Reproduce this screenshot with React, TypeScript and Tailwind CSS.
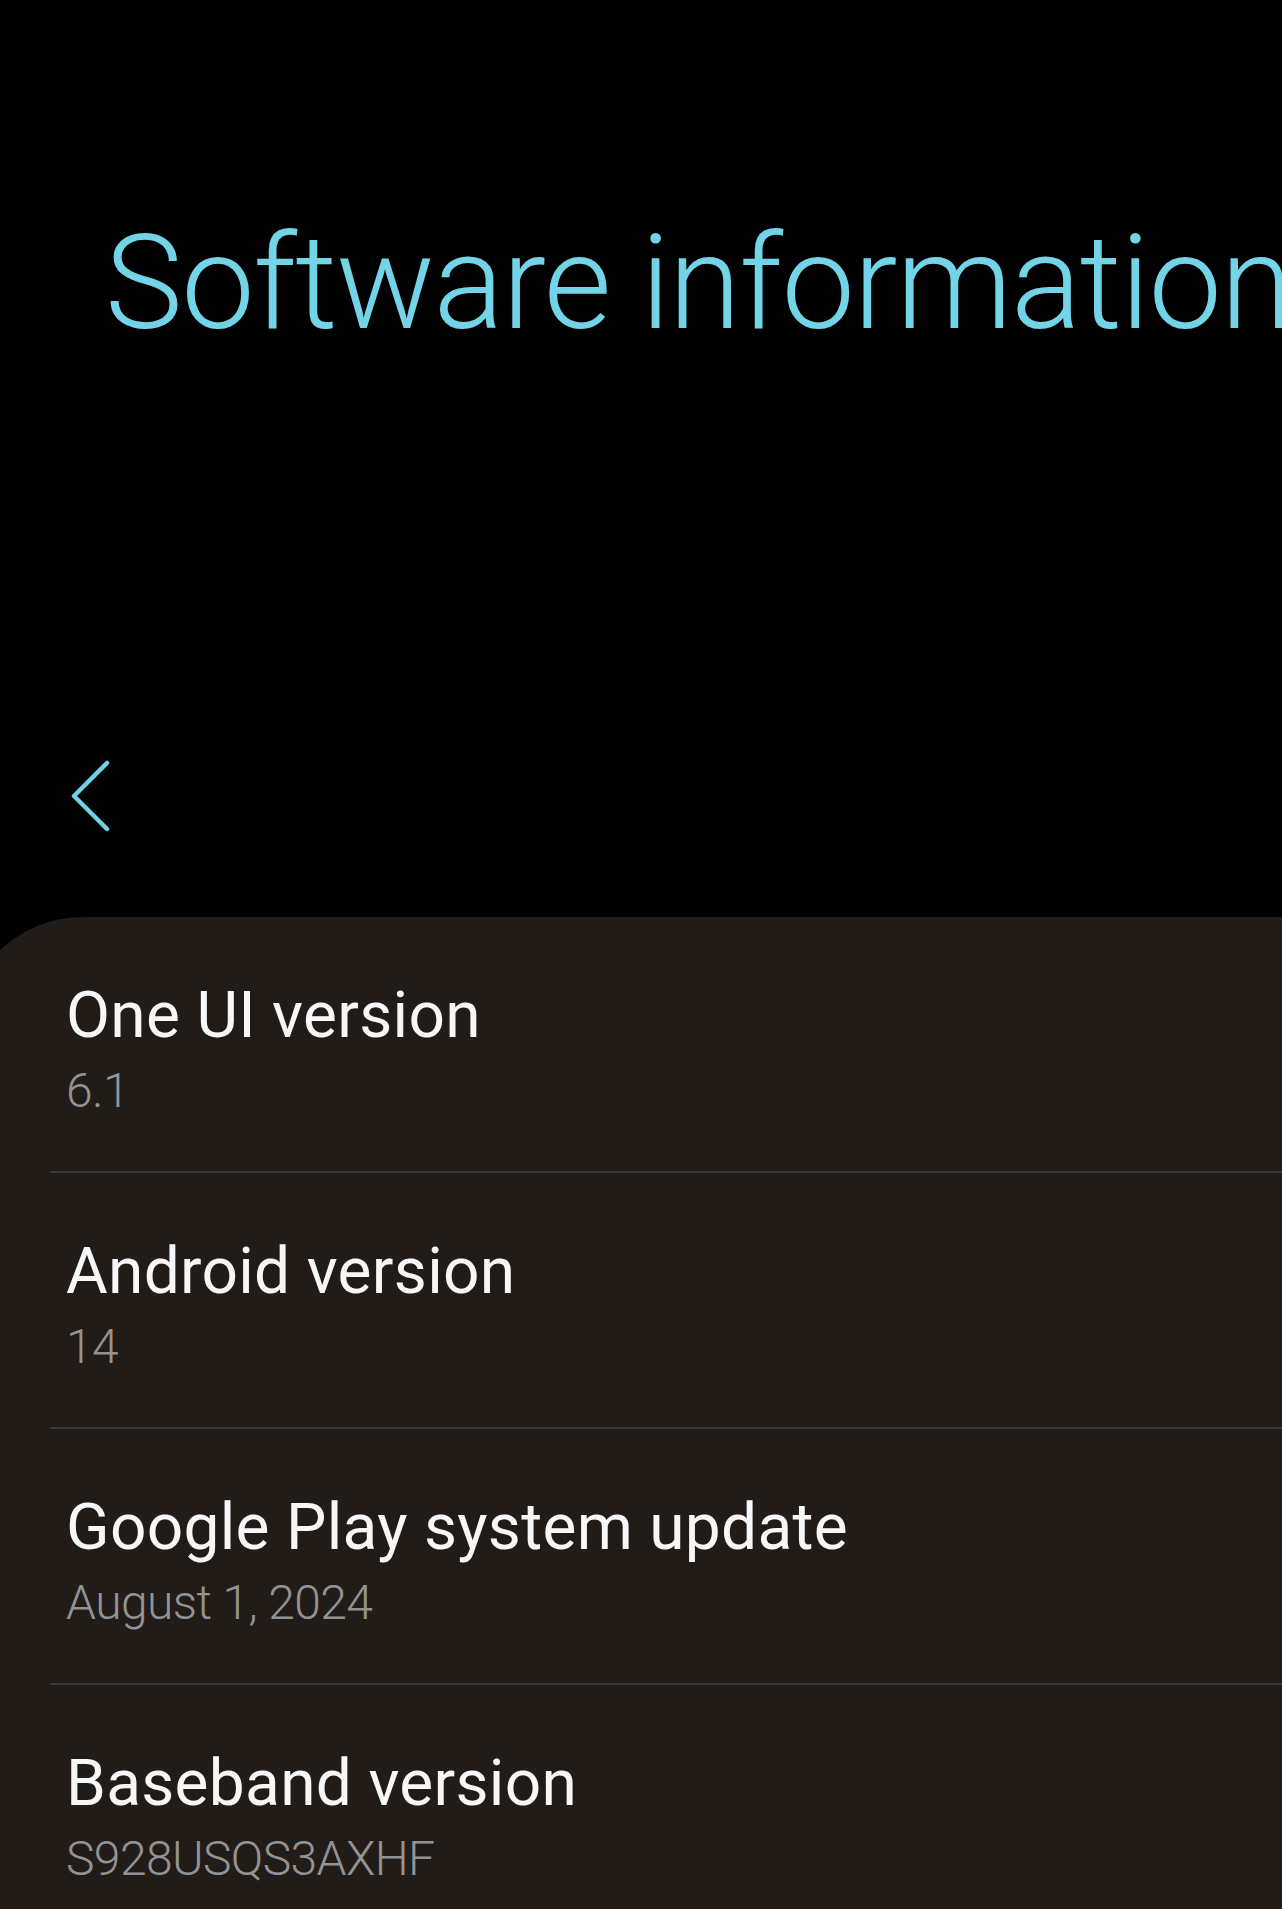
import React from "react";

const items = [
  { title: "One UI version", value: "6.1" },
  { title: "Android version", value: "14" },
  { title: "Google Play system update", value: "August 1, 2024" },
  { title: "Baseband version", value: "S928USQS3AXHF" },
];

const InfoRow: React.FC<{ title: string; value: string; last?: boolean }> = ({
  title,
  value,
  last,
}) => (
  <div className="flex h-[256px] flex-col">
    <div className="flex-1 pl-[104px] pt-[67px]">
      <div className="text-[64px] font-normal leading-[64px] tracking-[0.3px] text-[#f7f7f7]">
        {title}
      </div>
      <div className="mt-[19px] text-[48px] font-light leading-[48px] tracking-[-0.6px] text-[#939393]">
        {value}
      </div>
    </div>
    {!last && <div className="ml-[88px] h-[2px] bg-[#3c3a39]" />}
  </div>
);

export default function App() {
  return (
    <div
      className="h-[1909px] w-full overflow-hidden bg-black"
      style={{ fontFamily: "Roboto, 'Noto Sans', sans-serif" }}
    >
      <div className="flex h-[917px] flex-col">
        <h1 className="whitespace-nowrap pl-[105px] pt-[218px] text-[131px] font-light leading-[131px] tracking-[-1.4px] text-[#73d3e7]">
          Software information
        </h1>
        <button className="ml-[66px] mt-[407px] h-[80px] w-[48px]" aria-label="Back">
          <svg width="48" height="80" viewBox="0 0 48 80" fill="none">
            <path
              d="M41 7 L8 40 L41 73"
              stroke="#6fd2e8"
              strokeWidth="4.5"
              strokeLinecap="round"
              strokeLinejoin="round"
            />
          </svg>
        </button>
      </div>
      <div className="ml-[-38px] h-[992px] w-[calc(100%+38px)] overflow-hidden rounded-tl-[121px] bg-[#221c19]">
        {items.map((item, i) => (
          <InfoRow
            key={item.title}
            title={item.title}
            value={item.value}
            last={i === items.length - 1}
          />
        ))}
      </div>
    </div>
  );
}
